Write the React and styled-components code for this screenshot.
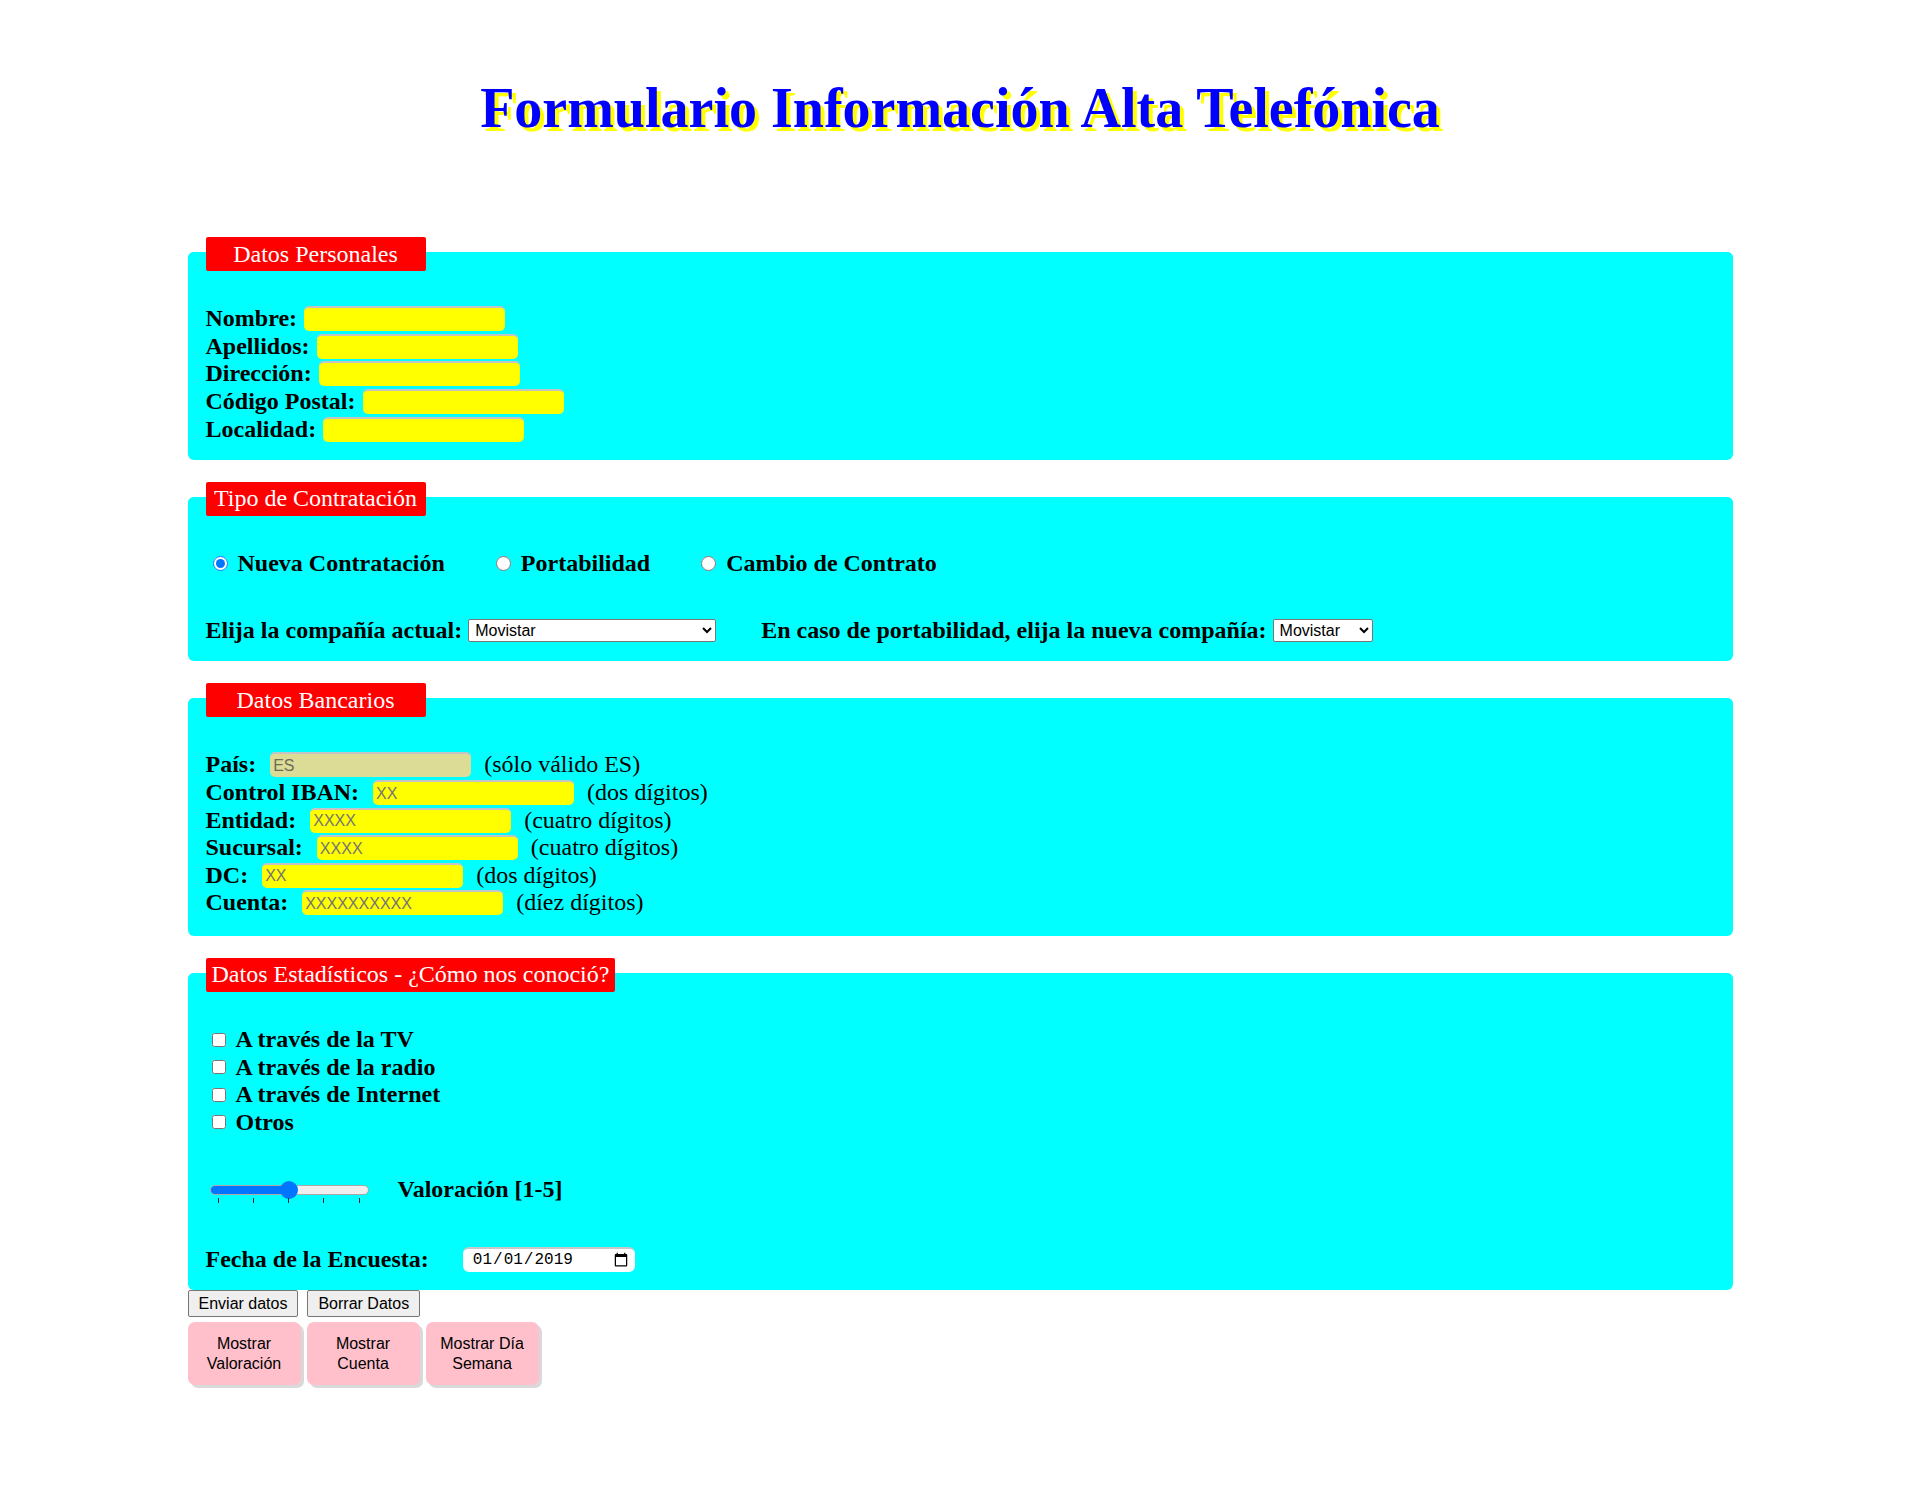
import React from 'react'
import styled, { createGlobalStyle } from 'styled-components'

const GlobalStyle = createGlobalStyle`
	body {
		margin: 0;
		background: #ffffff;
		font-family: "Liberation Serif", "Times New Roman", serif;
		color: #000000;
	}
`

const Page = styled.div`
	padding-bottom: 100px;
`

const Title = styled.h1`
	margin: 76px 0 97px;
	text-align: center;
	font-size: 56px;
	font-weight: 700;
	color: #0000ff;
	text-shadow: 4px 4px 0 #ffff00;
`

const Form = styled.form`
	width: 1545px;
	margin: 0 auto;
`

const Panel = styled.fieldset`
	margin: 0;
	margin-top: ${props => (props.$first ? '0' : '22px')};
	min-width: 0;
	padding: 34px 18px ${props => props.$pb || '17px'};
	border: 0;
	border-top: 4px solid #00ffff;
	border-radius: 6px;
	background: #00ffff;
`

const Legend = styled.legend`
	box-sizing: border-box;
	display: flex;
	justify-content: center;
	align-items: center;
	min-width: 220px;
	height: 34px;
	padding: 0 6px;
	font-size: 24px;
	color: #ffffff;
	background: #ff0000;
	border-radius: 2px;
`

const Row = styled.div`
	display: flex;
	align-items: center;
	height: 27.6px;
	font-size: 24px;
	margin-top: ${props => props.$mt || '0'};
`

const Label = styled.label`
	font-weight: 700;
	white-space: pre;
`

const Hint = styled.span`
	font-size: 24px;
`

const TextInput = styled.input`
	box-sizing: border-box;
	width: 201px;
	height: 25px;
	margin: ${props => (props.$wide ? '0 13px 0 14px' : '0 0 0 7px')};
	padding: 1px 3px;
	border: 0;
	border-top: 2px solid #c4c4c4;
	border-radius: 5px;
	background: ${props => (props.$locked ? '#dcdc96' : '#ffff00')};
	font-family: "Liberation Sans", Arial, sans-serif;
	font-size: 16px;
	color: ${props => (props.$locked ? '#6b6b5b' : '#000000')};
	outline: none;

	&::placeholder {
		color: #757575;
	}
`

const RadioGroup = styled.div`
	display: flex;
	align-items: center;
	gap: 44px;
	height: 27.6px;
	font-size: 24px;
`

const Option = styled.label`
	display: flex;
	align-items: center;
	font-weight: 700;
`

const Radio = styled.input`
	width: 15px;
	height: 15px;
	margin: 0 10px 0 7px;
`

const Check = styled.input`
	width: 14px;
	height: 14px;
	margin: 0 10px 0 6px;
`

const Select = styled.select`
	box-sizing: border-box;
	width: ${props => props.$w};
	height: 23px;
	margin-left: 6px;
	padding: 0 2px;
	border: 1px solid #767676;
	border-radius: 2px;
	background: #ffffff;
	font-family: "Liberation Sans", Arial, sans-serif;
	font-size: 16px;
	color: #000000;
`

const SelectLabel = styled(Label)`
	margin-left: ${props => (props.$second ? '45px' : '0')};
`

const SliderWrap = styled.div`
	display: flex;
	flex-direction: column;
	width: 159px;
	margin-left: 4px;
	padding-top: 8px;
`

const Range = styled.input`
	-webkit-appearance: none;
	appearance: none;
	box-sizing: border-box;
	width: 159px;
	height: 10px;
	margin: 0;
	border: 1px solid #a8a8a8;
	border-radius: 5px;
	background: linear-gradient(to right, #0075ff 0 50%, #efefef 50% 100%);
	outline: none;

	&::-webkit-slider-thumb {
		-webkit-appearance: none;
		appearance: none;
		width: 18px;
		height: 18px;
		border: 0;
		border-radius: 50%;
		background: #0075ff;
	}
`

const Ticks = styled.div`
	display: flex;
	justify-content: space-between;
	margin-top: 3px;
	padding: 0 9px 0 8px;
`

const Tick = styled.span`
	width: 1px;
	height: 5px;
	background: #222222;
`

const SliderText = styled.span`
	margin-left: 29px;
	font-weight: 700;
`

const DateInput = styled.input`
	box-sizing: border-box;
	width: 172px;
	height: 25px;
	margin-left: 34px;
	padding: 0 4px 0 9px;
	border: 0;
	border-top: 2px solid #c8c8c8;
	border-radius: 6px;
	background: #ffffff;
	font-family: "Liberation Mono", "DejaVu Sans Mono", monospace;
	font-size: 16px;
	color: #000000;
`

const Buttons = styled.div`
	display: flex;
	align-items: flex-end;
	gap: 9px;
`

const Button = styled.button`
	box-sizing: border-box;
	height: 27px;
	padding: 0 10px;
	border: 1px solid #767676;
	border-radius: 2px;
	background: #efefef;
	font-family: "Liberation Sans", Arial, sans-serif;
	font-size: 16px;
	color: #000000;
`

const ShowButtons = styled.div`
	display: flex;
	gap: 6px;
	margin-top: 5px;
`

const ShowButton = styled.button`
	box-sizing: border-box;
	width: 113px;
	height: 63px;
	padding: 0 12px;
	border: 0;
	border-radius: 7px;
	background: #ffc0cb;
	box-shadow: 3px 3px 0 #d9d9d9;
	font-family: "Liberation Sans", Arial, sans-serif;
	font-size: 16px;
	line-height: 20px;
	color: #000000;
`

const personal = ['Nombre:', 'Apellidos:', 'Dirección:', 'Código Postal:', 'Localidad:']

const bank = [
	{ label: 'País:', value: 'ES', hint: '(sólo válido ES)', locked: true },
	{ label: 'Control IBAN:', placeholder: 'XX', hint: '(dos dígitos)' },
	{ label: 'Entidad:', placeholder: 'XXXX', hint: '(cuatro dígitos)' },
	{ label: 'Sucursal:', placeholder: 'XXXX', hint: '(cuatro dígitos)' },
	{ label: 'DC:', placeholder: 'XX', hint: '(dos dígitos)' },
	{ label: 'Cuenta:', placeholder: 'XXXXXXXXXX', hint: '(díez dígitos)' },
]

const origins = ['A través de la TV', 'A través de la radio', 'A través de Internet', 'Otros']

const companies = ['Movistar', 'Vodafone', 'Orange', 'Yoigo']

const App = () => (
	<Page>
		<GlobalStyle />
		<Title>Formulario Información Alta Telefónica</Title>
		<Form onSubmit={e => e.preventDefault()}>
			<Panel $first>
				<Legend>Datos Personales</Legend>
				{personal.map(label => (
					<Row key={label}>
						<Label>{label}</Label>
						<TextInput type="text" />
					</Row>
				))}
			</Panel>

			<Panel>
				<Legend>Tipo de Contratación</Legend>
				<RadioGroup>
					<Option>
						<Radio type="radio" name="tipo" defaultChecked />
						Nueva Contratación
					</Option>
					<Option>
						<Radio type="radio" name="tipo" />
						Portabilidad
					</Option>
					<Option>
						<Radio type="radio" name="tipo" />
						Cambio de Contrato
					</Option>
				</RadioGroup>
				<Row $mt="39px">
					<SelectLabel>Elija la compañía actual:</SelectLabel>
					<Select $w="248px" defaultValue="Movistar">
						{companies.map(c => (
							<option key={c}>{c}</option>
						))}
					</Select>
					<SelectLabel $second>En caso de portabilidad, elija la nueva compañía:</SelectLabel>
					<Select $w="100px" defaultValue="Movistar">
						{companies.map(c => (
							<option key={c}>{c}</option>
						))}
					</Select>
				</Row>
			</Panel>

			<Panel $pb="19px">
				<Legend>Datos Bancarios</Legend>
				{bank.map(item => (
					<Row key={item.label}>
						<Label>{item.label}</Label>
						<TextInput
							type="text"
							$wide
							$locked={item.locked}
							placeholder={item.placeholder}
							defaultValue={item.value}
							readOnly={item.locked}
						/>
						<Hint>{item.hint}</Hint>
					</Row>
				))}
			</Panel>

			<Panel>
				<Legend>Datos Estadísticos - ¿Cómo nos conoció?</Legend>
				{origins.map(o => (
					<Row key={o}>
						<Option>
							<Check type="checkbox" />
							{o}
						</Option>
					</Row>
				))}
				<Row $mt="40px">
					<SliderWrap>
						<Range type="range" min="1" max="5" defaultValue="3" />
						<Ticks>
							{[1, 2, 3, 4, 5].map(n => (
								<Tick key={n} />
							))}
						</Ticks>
					</SliderWrap>
					<SliderText>Valoración [1-5]</SliderText>
				</Row>
				<Row $mt="42px">
					<Label>Fecha de la Encuesta:</Label>
					<DateInput type="date" defaultValue="2019-01-01" />
				</Row>
			</Panel>

			<Buttons>
				<Button type="submit">Enviar datos</Button>
				<Button type="reset">Borrar Datos</Button>
			</Buttons>
			<ShowButtons>
				<ShowButton type="button">Mostrar Valoración</ShowButton>
				<ShowButton type="button">Mostrar Cuenta</ShowButton>
				<ShowButton type="button">Mostrar Día Semana</ShowButton>
			</ShowButtons>
		</Form>
	</Page>
)

export default App
